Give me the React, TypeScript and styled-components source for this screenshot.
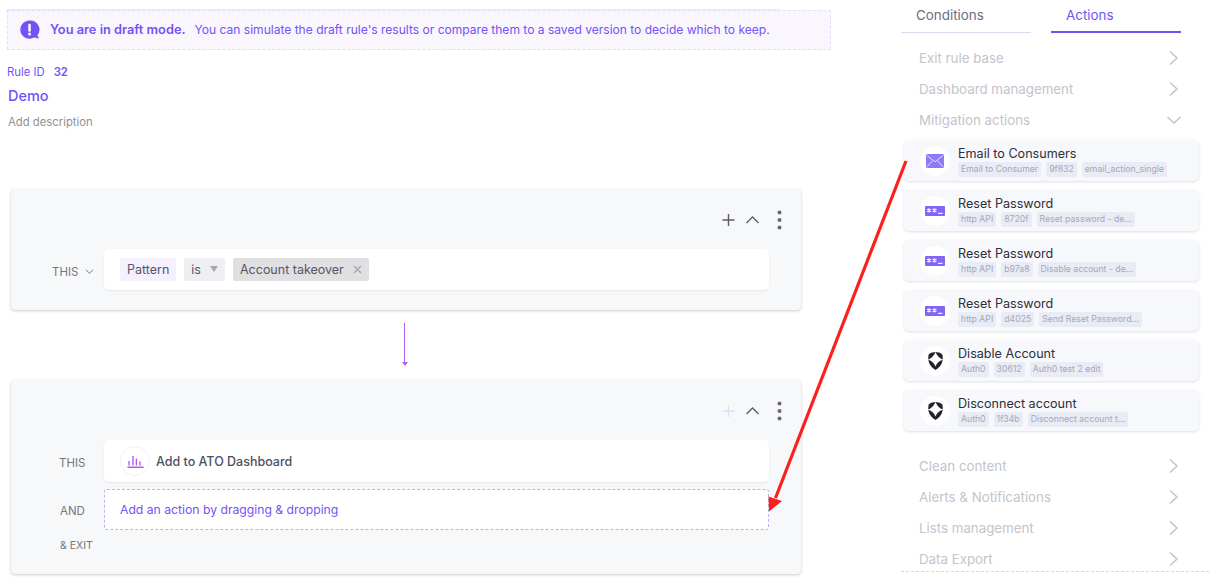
import React from "react";
import styled, { createGlobalStyle } from "styled-components";

const GlobalStyle = createGlobalStyle`
  html, body { margin: 0; padding: 0; background: #fff; }
  body { font-family: Inter, "Noto Sans", "Liberation Sans", sans-serif; }
  * { box-sizing: border-box; }
`;

const purple = "#7353f6";

const Chevron = ({ open, color = "#c5c5ce", size = 16 }: { open?: boolean; color?: string; size?: number }) => (
  <svg width={size} height={size} viewBox="0 0 16 16" fill="none" stroke={color} strokeWidth="1.6">
    {open ? <path d="M1.500 5l6.500 6 6.500-6" /> : <path d="M4 1.500l7 6.500-7 6.500" />}
  </svg>
);

const DraftIcon = () => (
  <svg width="20" height="20" viewBox="0 0 21 21">
    <path d="M10 .5a9.6 9.6 0 1 0 4.600 18l5.400.9-1.700-3.400A9.600 9.600 0 0 0 10 .5z" fill={purple} />
    <rect x="8.700" y="4" width="2.600" height="8.400" rx="1.100" fill="#fff" />
    <circle cx="10" cy="14.800" r="1.600" fill="#fff" />
  </svg>
);

const MailIcon = () => (
  <svg width="18" height="14" viewBox="0 0 18 14">
    <rect width="18" height="14" rx="1.500" fill="#8f79f8" />
    <path d="M1 1.500l8 6.300 8-6.300M1 12.800l5.600-6.200M17 12.800l-5.600-6.200" fill="none" stroke="#e4defd" strokeWidth="1" />
  </svg>
);

const KeyIcon = () => (
  <svg width="20" height="10" viewBox="0 0 20 10">
    <rect width="20" height="10" rx="1" fill="#8264f7" />
    <g stroke="#f1edff" strokeWidth="1.200">
      <path d="M4 2.300v4.200M2 3.200l4 2.400M6 3.200l-4 2.400" />
      <path d="M9.500 2.300v4.200M7.500 3.200l4 2.400M11.500 3.200l-4 2.400" />
      <path d="M13 7.400h4.500" />
    </g>
  </svg>
);

const ShieldIcon = () => (
  <svg width="15" height="18" viewBox="0 0 15 18" fill="#23232e">
    <path
      fillRule="evenodd"
      d="M3 .8L7.500 0 12 .8l2.400 1.600c.5 2.300.5 4.600 0 6.800-.9 3.700-3.300 6.700-6.900 8.800-3.600-2.100-6-5.100-6.900-8.800C.1 7 .1 4.700.600 2.400zM7.500 0C6 3.500 4 6 .1 7.800 4 9 6 11 7.500 14.400 9 11 11 9 14.900 7.800 11 6 9 3.500 7.500 0z"
    />
  </svg>
);

const BarsIcon = () => (
  <svg width="17" height="13" viewBox="0 0 17 13" fill="none" stroke="#b65cf0" strokeWidth="1.400">
    <path d="M2 10.400V6M6 10.400V1M9.400 10.400V3.600M13 10.400V6.600M.4 12.200h16.200" />
  </svg>
);

const Page = styled.div`
  position: relative;
  width: 1209px;
  height: 584px;
  overflow: hidden;
  display: flex;
`;

const Main = styled.main`
  width: 901px;
  flex: none;
  padding: 9px 0 0 7px;
  display: flex;
  flex-direction: column;
`;

const TopRule = styled.div`
  width: 772px;
  height: 1px;
  flex: none;
  background: #ece9f1;
`;

const Banner = styled.div`
  width: 824px;
  height: 40px;
  display: flex;
  align-items: center;
  padding: 0 0 1px 12px;
  background: #f9f6fe;
  border: 1px dashed #e8dcfa;
  color: ${purple};
  font-size: 12.060px;
  white-space: nowrap;
`;

const BannerBold = styled.strong`
  margin: 0 9px 0 10px;
  font-size: 12.800px;
  font-weight: 600;
`;

const RuleId = styled.div`
  margin-top: 15px;
  height: 14px;
  font-size: 11.300px;
  line-height: 14px;
  color: ${purple};
`;

const RuleIdValue = styled.b`
  margin-left: 9px;
  font-weight: 600;
`;

const RuleName = styled.div`
  margin: 8px 0 0 1px;
  font-size: 14.500px;
  line-height: 18px;
  font-weight: 500;
  color: ${purple};
`;

const Description = styled.div`
  margin: 10px 0 0 1px;
  font-size: 11.300px;
  line-height: 15px;
  color: #8f8f95;
`;

const Card = styled.section<{ $height: number; $top: number }>`
  width: 790px;
  height: ${(p) => p.$height}px;
  margin: ${(p) => p.$top}px 0 0 4px;
  flex: none;
  background: #f7f8fa;
  border-radius: 4px;
  box-shadow: 0 1px 3px rgba(0, 0, 0, 0.2);
  display: flex;
  flex-direction: column;
`;

const CardTools = styled.div`
  height: 60px;
  flex: none;
  display: flex;
  align-items: flex-start;
  justify-content: flex-end;
  padding: 21px 14px 0 0;
`;

const Tool = styled.svg`
  width: 15px;
  height: 20px;
  margin-left: 9px;
  display: block;
`;

const DotsTool = styled(Tool)`
  margin-left: 12px;
`;

const Row = styled.div`
  display: flex;
  align-items: center;
`;

const RowLabel = styled.div<{ $indent?: number; $drop?: number }>`
  width: 93px;
  flex: none;
  padding-left: ${(p) => p.$indent ?? 48}px;
  padding-top: ${(p) => p.$drop ?? 4}px;
  display: flex;
  align-items: center;
  gap: 7px;
  font-size: 11.500px;
  color: #75757a;
  white-space: nowrap;
`;

const Field = styled.div<{ $height: number }>`
  width: 665px;
  height: ${(p) => p.$height}px;
  padding-left: 16px;
  display: flex;
  align-items: center;
  background: #fff;
  border-radius: 5px;
  box-shadow: 0 1px 2px rgba(0, 0, 0, 0.08);
`;

const DropZone = styled.div`
  width: 665px;
  height: 41px;
  margin-top: 7px;
  padding-left: 15px;
  display: flex;
  align-items: center;
  background: #fff;
  border: 1px dashed #bfb0f6;
  border-radius: 3px;
  font-size: 12.200px;
  color: ${purple};
`;

const Pill = styled.span<{ $bg: string }>`
  height: 23px;
  margin-right: 8px;
  padding: 0 7px;
  display: inline-flex;
  align-items: center;
  gap: 9px;
  background: ${(p) => p.$bg};
  border-radius: 2px;
  font-size: 12.500px;
  color: #55556a;
`;

const Caret = styled.i`
  width: 0;
  height: 0;
  border-left: 4px solid transparent;
  border-right: 4px solid transparent;
  border-top: 6px solid #a6a6b2;
  margin-bottom: 2px;
`;

const Remove = styled.svg`
  width: 9px;
  height: 9px;
`;

const ActionTitle = styled.span`
  margin-left: 6px;
  font-size: 12.500px;
  font-weight: 500;
  color: #4d4f5f;
`;

const IconCircle = styled.span<{ $size?: number; $line?: boolean }>`
  width: ${(p) => p.$size ?? 30}px;
  height: ${(p) => p.$size ?? 30}px;
  flex: none;
  display: flex;
  align-items: center;
  justify-content: center;
  background: #fff;
  border-radius: 50%;
  border: ${(p) => (p.$line ? "1px solid #f1f1f4" : "none")};
`;

const Connector = styled.div`
  width: 7px;
  height: 43px;
  margin: 13px 0 0 394px;
  flex: none;
  display: flex;
  flex-direction: column;
  align-items: center;
`;

const ConnectorLine = styled.div`
  width: 1px;
  flex: 1;
  background: #b55cf2;
`;

const ConnectorHead = styled.div`
  border-left: 3px solid transparent;
  border-right: 3px solid transparent;
  border-top: 4px solid #b55cf2;
`;

const ExitLabel = styled.div`
  margin-top: 9px;
  padding-left: 49px;
  font-size: 10.500px;
  line-height: 14px;
  color: #75757a;
`;

const Side = styled.aside`
  flex: 1;
  display: flex;
  flex-direction: column;
  position: relative;
`;

const Tabs = styled.div`
  display: flex;
  gap: 20px;
  height: 33px;
  flex: none;
`;

const Tab = styled.div<{ $active?: boolean }>`
  width: 130px;
  height: 33px;
  padding: 7px 0 0 15px;
  font-size: 13.400px;
  line-height: 17px;
  color: ${(p) => (p.$active ? purple : "#6d6d85")};
  border-bottom: ${(p) => (p.$active ? `2px solid ${purple}` : "1px solid #d5dcef")};
`;

const Group = styled.div<{ $top: number }>`
  margin: ${(p) => p.$top}px 0 0 0;
  padding: 0 27px 0 18px;
  height: 31px;
  flex: none;
  display: flex;
  align-items: center;
  justify-content: space-between;
  font-size: 13.300px;
  color: #c4c4cc;
`;

const ActionList = styled.div`
  margin: 5px 0 0 3px;
  width: 295px;
  display: flex;
  flex-direction: column;
  gap: 9px;
`;

const ActionCard = styled.div`
  height: 41px;
  padding-left: 16px;
  display: flex;
  align-items: center;
  gap: 8px;
  background: #f7f8fb;
  border-radius: 5px;
  box-shadow: 0 1px 3px rgba(0, 0, 0, 0.13);
`;

const ActionText = styled.div`
  padding-top: 2px;
  display: flex;
  flex-direction: column;
`;

const ActionName = styled.div`
  font-size: 12.600px;
  line-height: 16px;
  color: #2e2e3a;
`;

const Tags = styled.div`
  display: flex;
  gap: 5px;
`;

const Tag = styled.span`
  height: 15px;
  padding: 0 3px;
  background: #e9ebf5;
  border-radius: 2px;
  font-size: 8.700px;
  line-height: 15px;
  color: #a6a8b6;
  white-space: nowrap;
`;

const SideFooter = styled.div`
  position: absolute;
  left: 0;
  right: 0;
  top: 571px;
  border-top: 1px dashed #d6d6de;
`;

const RedArrow = styled.svg`
  position: absolute;
  left: 0;
  top: 0;
  pointer-events: none;
`;

const actions = [
  { name: "Email to Consumers", icon: <MailIcon />, tags: ["Email to Consumer", "9f832", "email_action_single"] },
  { name: "Reset Password", icon: <KeyIcon />, tags: ["http API", "8720f", "Reset password - de..."] },
  { name: "Reset Password", icon: <KeyIcon />, tags: ["http API", "b97a8", "Disable account - de..."] },
  { name: "Reset Password", icon: <KeyIcon />, tags: ["http API", "d4025", "Send Reset Password..."] },
  { name: "Disable Account", icon: <ShieldIcon />, tags: ["Auth0", "30612", "Auth0 test 2 edit"] },
  { name: "Disconnect account", icon: <ShieldIcon />, tags: ["Auth0", "1f34b", "Disconnect account t..."] },
];

const Tools = ({ plusColor }: { plusColor: string }) => (
  <CardTools>
    <Tool viewBox="0 0 15 20" fill="none" stroke={plusColor} strokeWidth="1.400">
      <path d="M7.500 4v12M1.500 10h12" />
    </Tool>
    <Tool viewBox="0 0 15 20" fill="none" stroke="#5d5d63" strokeWidth="1.300">
      <path d="M1.500 13l6-6 6 6" />
    </Tool>
    <DotsTool viewBox="0 0 15 20" fill="#6a6a70">
      <circle cx="7.500" cy="2.500" r="2" />
      <circle cx="7.500" cy="10" r="2" />
      <circle cx="7.500" cy="17.500" r="2" />
    </DotsTool>
  </CardTools>
);

export default function App() {
  return (
    <Page>
      <GlobalStyle />
      <Main>
        <TopRule />
        <Banner>
          <DraftIcon />
          <BannerBold>You are in draft mode.</BannerBold>
          You can simulate the draft rule's results or compare them to a saved version to decide which to keep.
        </Banner>
        <RuleId>
          Rule ID<RuleIdValue>32</RuleIdValue>
        </RuleId>
        <RuleName>Demo</RuleName>
        <Description>Add description</Description>

        <Card $height={121} $top={59}>
          <Tools plusColor="#5d5d63" />
          <Row>
            <RowLabel $indent={41}>
              THIS
              <Chevron open color="#6d6d73" size={9} />
            </RowLabel>
            <Field $height={41}>
              <Pill $bg="#f6effd">Pattern</Pill>
              <Pill $bg="#eeeff3">
                is <Caret />
              </Pill>
              <Pill $bg="#e0e0e2">
                Account takeover
                <Remove viewBox="0 0 9 9" stroke="#a9a9b4" strokeWidth="1.500">
                  <path d="M1 1l7 7M8 1L1 8" />
                </Remove>
              </Pill>
            </Field>
          </Row>
        </Card>

        <Connector>
          <ConnectorLine />
          <ConnectorHead />
        </Connector>

        <Card $height={194} $top={14}>
          <Tools plusColor="#dbe3f6" />
          <Row>
            <RowLabel>THIS</RowLabel>
            <Field $height={42}>
              <IconCircle $line>
                <BarsIcon />
              </IconCircle>
              <ActionTitle>Add to ATO Dashboard</ActionTitle>
            </Field>
          </Row>
          <Row>
            <RowLabel $indent={49} $drop={10}>
              AND
            </RowLabel>
            <DropZone>Add an action by dragging &amp; dropping</DropZone>
          </Row>
          <ExitLabel>&amp; EXIT</ExitLabel>
        </Card>
      </Main>

      <Side>
        <Tabs>
          <Tab>Conditions</Tab>
          <Tab $active>Actions</Tab>
        </Tabs>
        <Group $top={9}>
          Exit rule base <Chevron />
        </Group>
        <Group $top={0}>
          Dashboard management <Chevron />
        </Group>
        <Group $top={0}>
          Mitigation actions <Chevron open />
        </Group>
        <ActionList>
          {actions.map((a, i) => (
            <ActionCard key={i}>
              <IconCircle>{a.icon}</IconCircle>
              <ActionText>
                <ActionName>{a.name}</ActionName>
                <Tags>
                  {a.tags.map((t) => (
                    <Tag key={t}>{t}</Tag>
                  ))}
                </Tags>
              </ActionText>
            </ActionCard>
          ))}
        </ActionList>
        <Group $top={19}>
          Clean content <Chevron />
        </Group>
        <Group $top={0}>
          Alerts &amp; Notifications <Chevron />
        </Group>
        <Group $top={0}>
          Lists management <Chevron />
        </Group>
        <Group $top={0}>
          Data Export <Chevron />
        </Group>
        <SideFooter />
      </Side>

      <RedArrow width="1209" height="584" viewBox="0 0 1209 584">
        <path d="M906 161L775.500 498" stroke="#fc1f1b" strokeWidth="3.200" fill="none" />
        <path d="M769 511.500l-.5-15 13.500 4.500z" fill="#fc1f1b" />
      </RedArrow>
    </Page>
  );
}
